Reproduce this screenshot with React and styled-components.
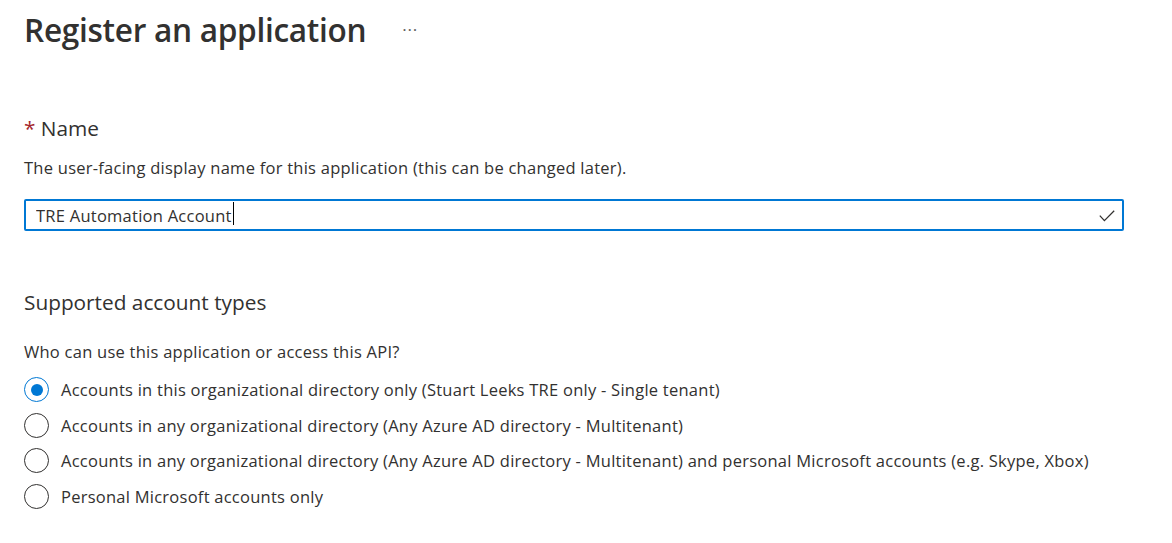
import React from "react";
import styled, { createGlobalStyle } from "styled-components";

const GlobalStyle = createGlobalStyle`
  html, body {
    margin: 0;
    padding: 0;
    background: #ffffff;
  }
  body {
    font-family: "Open Sans", "Noto Sans", "Liberation Sans", sans-serif;
    color: #323130;
  }
`;

const options = [
  "Accounts in this organizational directory only (Stuart Leeks TRE only - Single tenant)",
  "Accounts in any organizational directory (Any Azure AD directory - Multitenant)",
  "Accounts in any organizational directory (Any Azure AD directory - Multitenant) and personal Microsoft accounts (e.g. Skype, Xbox)",
  "Personal Microsoft accounts only",
];

const App = () => {
  const [selected, setSelected] = React.useState(0);
  const [name, setName] = React.useState("TRE Automation Account");

  return (
    <>
      <GlobalStyle />
      <StPage>
        <StHeader>
          <StTitle>Register an application</StTitle>
          <StMoreButton aria-label="More">···</StMoreButton>
        </StHeader>

        <StSection $top={62}>
          <StSectionTitle>
            <StRequired>*</StRequired> Name
          </StSectionTitle>
          <StHelp $top={15}>
            The user-facing display name for this application (this can be
            changed later).
          </StHelp>
          <StInputWrap>
            <StInput value={name} onChange={(e) => setName(e.target.value)} />
            <StCaret />
            <StCheck viewBox="0 0 16 12" aria-hidden="true">
              <path d="M0.8 5.6 L5.4 10.6 L15.2 0.8" />
            </StCheck>
          </StInputWrap>
        </StSection>

        <StSection $top={57}>
          <StSectionTitle>Supported account types</StSectionTitle>
          <StHelp $top={25}>Who can use this application or access this API?</StHelp>
          <StRadioList>
            {options.map((label, i) => (
              <StRadioRow key={i} onClick={() => setSelected(i)}>
                <StRadio $checked={selected === i} />
                <span>{label}</span>
              </StRadioRow>
            ))}
          </StRadioList>
        </StSection>
      </StPage>
    </>
  );
};

export default App;

const StPage = styled.div`
  padding: 8px 24px 0 24px;
  width: 1100px;
`;
const StHeader = styled.div`
  display: flex;
  align-items: center;
  gap: 30px;
`;
const StTitle = styled.h1`
  margin: 0;
  font-size: 31.6px;
  font-weight: 600;
  line-height: 44px;
  letter-spacing: -0.3px;
  color: #323130;
`;
const StMoreButton = styled.button`
  border: none;
  background: none;
  padding: 0 6px;
  font-family: inherit;
  font-size: 17px;
  line-height: 20px;
  color: #605e5c;
  cursor: pointer;
  letter-spacing: 0.8px;
`;
const StSection = styled.div`
  display: flex;
  flex-direction: column;
  margin-top: ${(p) => p.$top}px;
`;
const StSectionTitle = styled.h2`
  margin: 0;
  font-size: 20.8px;
  font-weight: 400;
  line-height: 28px;
`;
const StRequired = styled.span`
  color: #a4262c;
`;
const StHelp = styled.p`
  margin: ${(p) => p.$top}px 0 0 0;
  font-size: 16.5px;
  letter-spacing: 0.25px;
  line-height: 22px;
`;
const StInputWrap = styled.div`
  position: relative;
  margin-top: 20px;
  height: 32px;
  box-sizing: border-box;
  border: 2px solid #0078d4;
  border-radius: 2px;
  display: flex;
  align-items: center;
`;
const StInput = styled.input`
  flex: 1;
  border: none;
  outline: none;
  background: transparent;
  font-family: inherit;
  font-size: 16.5px;
  letter-spacing: 0.25px;
  color: #323130;
  padding: 0 10px;
  caret-color: transparent;
`;
const StCaret = styled.span`
  position: absolute;
  left: 207px;
  top: 1px;
  width: 1px;
  height: 23px;
  background: #000;
`;
const StCheck = styled.svg`
  width: 16px;
  height: 12px;
  margin-right: 7px;
  margin-top: 2px;
  fill: none;
  stroke: #323130;
  stroke-width: 1.3;
`;
const StRadioList = styled.div`
  display: flex;
  flex-direction: column;
  margin-top: 9px;
`;
const StRadioRow = styled.label`
  display: flex;
  align-items: center;
  gap: 12px;
  height: 35.5px;
  font-size: 16.5px;
  letter-spacing: 0.25px;
  cursor: pointer;
`;
const StRadio = styled.span`
  box-sizing: border-box;
  width: 25px;
  height: 25px;
  flex: 0 0 25px;
  border-radius: 50%;
  border: 1px solid ${(p) => (p.$checked ? "#0078d4" : "#323130")};
  display: flex;
  align-items: center;
  justify-content: center;

  &::after {
    content: "";
    display: ${(p) => (p.$checked ? "block" : "none")};
    width: 12px;
    height: 12px;
    border-radius: 50%;
    background: #0078d4;
  }
`;
